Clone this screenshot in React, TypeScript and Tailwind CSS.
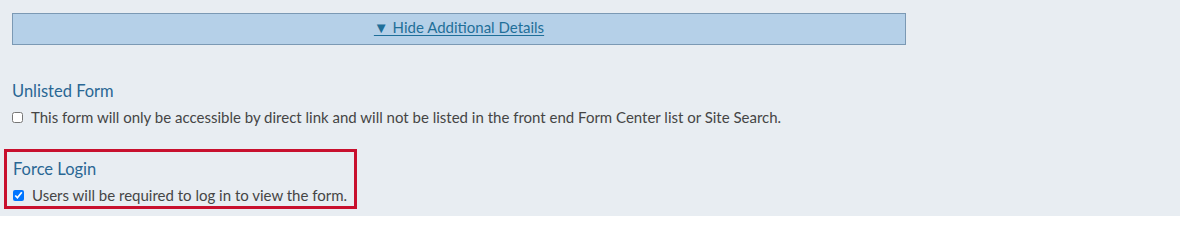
import React from "react";

export default function App() {
  return (
    <div className="h-[216px] w-full overflow-hidden bg-[#e8edf2] pl-3 pt-[13px] font-['Lato','Liberation_Sans',sans-serif]">
      {/* toggle bar */}
      <div className="flex h-[32px] w-[894px] items-center justify-center border border-[#7b99b4] bg-[#b5d0e8] pb-1">
        <a href="#" className="text-[15px] leading-5 text-[#1f6f99] underline underline-offset-2">
          ▼ Hide Additional Details
        </a>
      </div>

      {/* Unlisted form */}
      <div className="mt-9">
        <div className="text-[16.5px] leading-5 text-[#2a6794]">Unlisted Form</div>
        <label className="mt-1.5 flex items-center gap-2 text-[15px] leading-5 text-[#454545]">
          <input type="checkbox" className="m-0 h-[11px] w-[11px]" />
          This form will only be accessible by direct link and will not be listed in the front end Form Center list or Site Search.
        </label>
      </div>

      {/* Force login, highlighted */}
      <div className="-ml-2 mt-[22px] w-[353px] border-[3px] border-[#c8102e] pb-px pl-1.5 pt-[7px]">
        <div className="text-[16.5px] leading-5 text-[#2a6794]">Force Login</div>
        <label className="mt-1.5 flex items-center gap-2 text-[15px] leading-5 text-[#454545]">
          <input type="checkbox" defaultChecked className="m-0 h-[11px] w-[11px]" />
          Users will be required to log in to view the form.
        </label>
      </div>
    </div>
  );
}
